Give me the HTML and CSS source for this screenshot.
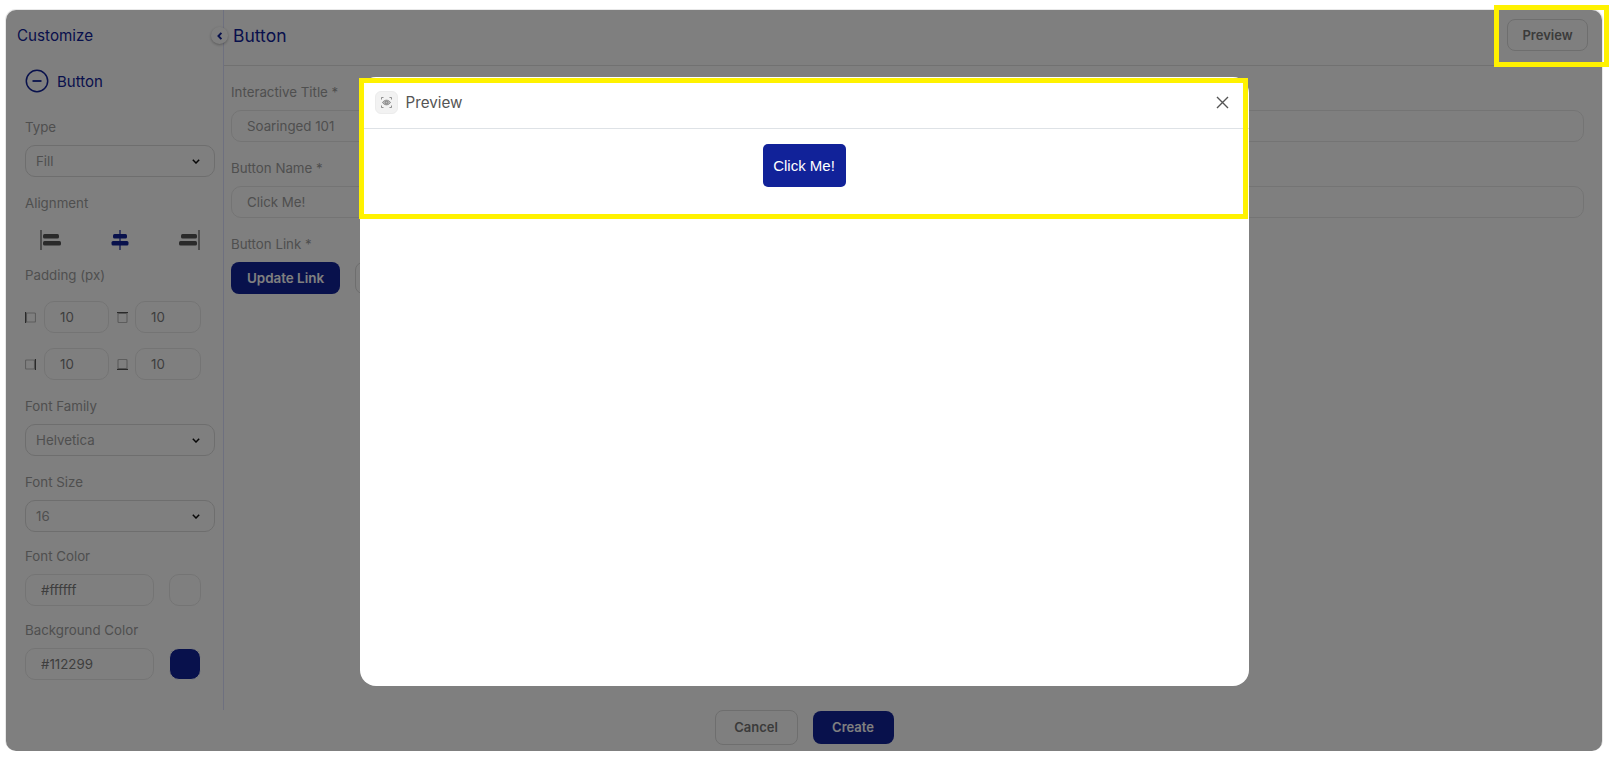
FILE: index.html
```html
<!DOCTYPE html>
<html lang="en">
  <head>
    <meta charset="UTF-8" />
    <meta name="viewport" content="width=device-width, initial-scale=1.0" />
    <title>Button</title>
    <link rel="stylesheet" href="styles.css">
  </head>
  <body>
    <div class="panel">
      <div class="panel-row">
        <aside class="sidebar">
          <div class="side-title">Customize</div>
          <button class="collapse">
            <svg width="8" height="8" viewBox="0 0 8 8"><path d="M5.400 .8 2.400 4l3 3.200" fill="none" stroke="#112299" stroke-width="1.900"/></svg>
          </button>
          <div class="side-head">
            <svg width="24" height="24" viewBox="0 0 24 24"><circle cx="12" cy="12" r="10.700" fill="none" stroke="#112299" stroke-width="1.500"/><path d="M7.500 12h9" stroke="#112299" stroke-width="1.800"/></svg>
            <span>Button</span>
          </div>

          <div class="group group-first">
            <label>Type</label>
            <div class="select"><span>Fill</span><svg width="8" height="5" viewBox="0 0 8 5"><path d="M.8 .8 4 4 7.200 .8" fill="none" stroke="#111" stroke-width="1.500"/></svg></div>
          </div>

          <div class="group">
            <label>Alignment</label>
            <div class="align-row">
              <svg width="21" height="20" viewBox="0 0 21 20"><path d="M1 0v20" stroke="#555" stroke-width="1.200"/><rect x="3" y="4" width="16" height="4.500" rx="1.500" fill="#555"/><rect x="3" y="11" width="18" height="4.500" rx="1.500" fill="#555"/></svg>
              <svg width="18" height="20" viewBox="0 0 18 20"><path d="M9 0v20" stroke="#112299" stroke-width="1.200"/><rect x="2" y="4" width="14" height="4.500" rx="1.500" fill="#112299"/><rect x=".5" y="11" width="17" height="4.500" rx="1.500" fill="#112299"/></svg>
              <svg width="21" height="20" viewBox="0 0 21 20"><path d="M20 0v20" stroke="#555" stroke-width="1.200"/><rect x="2" y="4" width="16" height="4.500" rx="1.500" fill="#555"/><rect x="0" y="11" width="18" height="4.500" rx="1.500" fill="#555"/></svg>
            </div>
          </div>

          <div class="group group-pad">
            <label>Padding (px)</label>
            <div class="pad-grid">
              <svg width="11" height="11" viewBox="0 0 11 11"><rect x="1.500" y="1" width="9" height="9" rx="1" fill="none" stroke="#bbb" stroke-width="1.200"/><path d="M.6 0v11" stroke="#555" stroke-width="1.200"/></svg>
              <input class="num" type="text" value="10" readonly />
              <svg width="11" height="11" viewBox="0 0 11 11"><rect x="1" y="1.500" width="9" height="9" rx="1" fill="none" stroke="#bbb" stroke-width="1.200"/><path d="M0 .6h11" stroke="#555" stroke-width="1.200"/></svg>
              <input class="num" type="text" value="10" readonly />
              <svg width="11" height="11" viewBox="0 0 11 11"><rect x=".5" y="1" width="9" height="9" rx="1" fill="none" stroke="#bbb" stroke-width="1.200"/><path d="M10.400 0v11" stroke="#555" stroke-width="1.200"/></svg>
              <input class="num" type="text" value="10" readonly />
              <svg width="11" height="11" viewBox="0 0 11 11"><rect x="1" y=".5" width="9" height="9" rx="1" fill="none" stroke="#bbb" stroke-width="1.200"/><path d="M0 10.400h11" stroke="#555" stroke-width="1.200"/></svg>
              <input class="num" type="text" value="10" readonly />
            </div>
          </div>

          <div class="group">
            <label>Font Family</label>
            <div class="select"><span>Helvetica</span><svg width="8" height="5" viewBox="0 0 8 5"><path d="M.8 .8 4 4 7.200 .8" fill="none" stroke="#111" stroke-width="1.500"/></svg></div>
          </div>

          <div class="group">
            <label>Font Size</label>
            <div class="select"><span>16</span><svg width="8" height="5" viewBox="0 0 8 5"><path d="M.8 .8 4 4 7.200 .8" fill="none" stroke="#111" stroke-width="1.500"/></svg></div>
          </div>

          <div class="group group-tight">
            <label>Font Color</label>
            <div class="color-row">
              <input class="hex" type="text" value="#ffffff" readonly />
              <span class="swatch swatch-white"></span>
            </div>
          </div>

          <div class="group group-tight">
            <label>Background Color</label>
            <div class="color-row">
              <input class="hex" type="text" value="#112299" readonly />
              <span class="swatch swatch-blue"></span>
            </div>
          </div>
        </aside>

        <main class="main">
          <header class="main-head">
            <h1>Button</h1>
            <button class="btn-outline preview-btn">Preview</button>
          </header>
          <div class="main-body">
            <div class="group">
              <label>Interactive Title *</label>
              <input class="text-input" type="text" value="Soaringed 101" readonly />
            </div>
            <div class="group">
              <label>Button Name *</label>
              <input class="text-input" type="text" value="Click Me!" readonly />
            </div>
            <div class="group">
              <label>Button Link *</label>
              <div class="link-row">
                <button class="btn-fill update-btn">Update Link</button>
                <button class="btn-outline ghost-btn"></button>
              </div>
            </div>
          </div>
        </main>
      </div>

      <footer class="panel-foot">
        <button class="btn-outline cancel-btn">Cancel</button>
        <button class="btn-fill create-btn">Create</button>
      </footer>

      <div class="backdrop">
        <div class="modal">
          <div class="modal-head">
            <span class="modal-icon">
              <svg width="11" height="11" viewBox="0 0 11 11" fill="none" stroke="#777" stroke-width=".8">
                <path d="M.5 2.500V.5h2M8.500 .5h2v2M.5 8.500v2h2M8.500 10.500h2v-2"/>
                <path d="M1.500 5.500C2.500 4 3.900 3.200 5.500 3.200S8.500 4 9.500 5.500C8.500 7 7.100 7.800 5.500 7.800S2.500 7 1.500 5.500z" fill="#bbb"/>
                <circle cx="5.500" cy="5.500" r="1.300"/>
              </svg>
            </span>
            <span class="modal-title">Preview</span>
            <svg class="modal-close" width="13" height="13" viewBox="0 0 13 13"><path d="M1 1l11 11M12 1 1 12" stroke="#555" stroke-width="1.400"/></svg>
          </div>
          <div class="modal-body">
            <button class="click-me">Click Me!</button>
          </div>
        </div>
      </div>

      <div class="mark mark-preview"></div>
      <div class="mark mark-modal"></div>
    </div>
  </body>
</html>
```

FILE: styles.css
```css
* {
  box-sizing: border-box;
}
body {
  margin: 0;
  padding: 9px 15px 0 5px;
  background: #fff;
  font-family: Inter, "Noto Sans", sans-serif;
  color: #9e9e9e;
}
button {
  font-family: inherit;
}

/* Panel */
.panel {
  position: relative;
  height: 742px;
  border: 1px solid #e8e8e8;
  border-bottom: 0;
  border-radius: 11px;
  background: #fff;
}
.panel-row {
  display: flex;
  height: 700px;
}

/* Sidebar */
.sidebar {
  position: relative;
  flex: none;
  width: 218px;
  padding: 16px 8px 0 19px;
  border-right: 1px solid #dde0ff;
}
.side-title {
  margin-left: -8px;
  font-size: 15.200px;
  line-height: 20px;
  color: #112299;
}
.collapse {
  position: absolute;
  top: 17px;
  right: -5px;
  display: flex;
  align-items: center;
  justify-content: center;
  width: 17px;
  height: 17px;
  padding: 0;
  border: 0;
  border-radius: 50%;
  background: #fff;
  box-shadow: 0 1px 3px rgba(0, 0, 0, 0.3);
}
.side-head {
  display: flex;
  align-items: center;
  gap: 8px;
  margin-top: 23px;
  font-size: 15px;
  color: #112299;
}
.group {
  margin-top: 17px;
}
.group-first {
  margin-top: 25px;
}
.group-pad {
  margin-top: 16px;
}
.group-tight {
  margin-top: 15px;
}
.group label {
  display: block;
  margin-bottom: 9px;
  font-size: 13.300px;
  line-height: 18px;
}

.select {
  display: flex;
  align-items: center;
  justify-content: space-between;
  height: 32px;
  padding: 0 14px 0 10px;
  border: 1px solid #dcdcdc;
  border-radius: 10px;
  font-size: 13.300px;
}
.align-row {
  display: flex;
  justify-content: space-between;
  margin-top: 18px;
  padding: 0 15px;
}
.align-row svg {
  display: block;
}
.pad-grid {
  display: grid;
  grid-template-columns: 19px 65px 26px 66px;
  align-items: center;
  row-gap: 15px;
  margin-top: 17px;
}
.pad-grid svg:nth-child(4n+3) {
  margin-left: 8px;
}
input {
  height: 32px;
  border: 1px solid #e8e8e8;
  border-radius: 10px;
  background: transparent;
  font-family: inherit;
  font-size: 13.300px;
  color: #9e9e9e;
  outline: none;
}
.num {
  width: 100%;
  padding: 0 15px;
  color: #7c7c7c;
}
.color-row {
  display: flex;
  gap: 15px;
}
.hex {
  width: 129px;
  padding: 0 15px;
  color: #7c7c7c;
}
.swatch {
  width: 32px;
  height: 32px;
  border: 1px solid #e8e8e8;
  border-radius: 10px;
}
.swatch-blue {
  background: #112299;
  border-color: #fff;
}

/* Main */
.main {
  flex: 1;
}
.main-head {
  display: flex;
  justify-content: space-between;
  height: 56px;
  padding: 9px 14px 0 9px;
  border-bottom: 1px solid #e2e2e2;
}
.main-head h1 {
  margin: 0;
  font-size: 17.500px;
  font-weight: 400;
  line-height: 34px;
  color: #112299;
}
.main-body {
  padding: 0 18px 0 7px;
}
.text-input {
  display: block;
  width: 100%;
  padding: 0 15px;
}
.link-row {
  display: flex;
  gap: 15px;
}
.btn-outline {
  border: 1px solid #dcdcdc;
  border-radius: 8px;
  background: #fff;
  font-size: 13px;
  font-weight: 600;
  color: #777;
}
.btn-fill {
  border: 0;
  border-radius: 8px;
  background: #112299;
  font-size: 13px;
  font-weight: 600;
  color: #fff;
}
.preview-btn {
  width: 81px;
  height: 32px;
}
.update-btn {
  width: 109px;
  height: 32px;
  font-size: 13.400px;
}
.ghost-btn {
  width: 120px;
  height: 32px;
}

/* Footer */
.panel-foot {
  display: flex;
  align-items: center;
  justify-content: center;
  gap: 15px;
  height: 35px;
}
.cancel-btn {
  width: 83px;
  height: 35px;
  padding-bottom: 3px;
}
.create-btn {
  width: 81px;
  height: 33px;
  padding-bottom: 3px;
}

/* Modal */
.backdrop {
  position: absolute;
  inset: 0;
  display: flex;
  align-items: flex-start;
  justify-content: center;
  padding-top: 67px;
  border-radius: 10px;
  background: rgba(0, 0, 0, 0.5);
}
.modal {
  width: 889px;
  height: 609px;
  border-radius: 16px;
  background: #fff;
}
.modal-head {
  display: flex;
  align-items: center;
  height: 52px;
  padding: 0 20px 0 15px;
  border-bottom: 1px solid #dee2e6;
}
.modal-icon {
  display: flex;
  align-items: center;
  justify-content: center;
  width: 23px;
  height: 23px;
  border: 1px solid #ececec;
  border-radius: 6px;
  background: #f2f2f2;
}
.modal-title {
  flex: 1;
  margin-left: 8px;
  font-size: 15.200px;
  color: #555;
}
.modal-body {
  display: flex;
  justify-content: center;
  padding-top: 15px;
}
.click-me {
  width: 83px;
  height: 43px;
  padding: 0;
  border: 0;
  border-radius: 5px;
  background: #112299;
  font-family: "Liberation Sans", Arial, sans-serif;
  font-size: 15px;
  white-space: nowrap;
  color: #fff;
}

/* Highlight marks */
.mark {
  position: absolute;
  border: 5px solid #fff200;
}
.mark-preview {
  top: -5px;
  left: 1488px;
  width: 115px;
  height: 62px;
}
.mark-modal {
  top: 68px;
  left: 353px;
  width: 889px;
  height: 141px;
}
```
